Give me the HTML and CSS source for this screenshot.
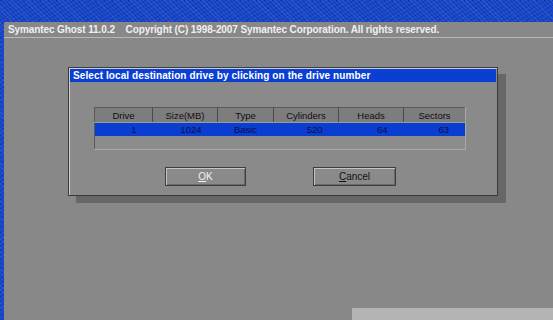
FILE: index.html
```html
<!DOCTYPE html>
<html lang="en">
<head>
  <meta charset="UTF-8" />
  <title>Symantec Ghost</title>
  <link rel="stylesheet" href="styles.css">
</head>
<body>
  <div class="screen">
    <div class="topbar">Symantec Ghost 11.0.2&nbsp;&nbsp;&nbsp; Copyright (C) 1998-2007 Symantec Corporation. All rights reserved.</div>

    <div class="dialog">
      <div class="dialog-title">Select local destination drive by clicking on the drive number</div>

      <table class="drives">
        <thead>
          <tr>
            <th class="c-drive">Drive</th>
            <th class="c-size">Size(MB)</th>
            <th class="c-type">Type</th>
            <th class="c-cyl">Cylinders</th>
            <th class="c-heads">Heads</th>
            <th class="c-sect">Sectors</th>
          </tr>
        </thead>
        <tbody>
          <tr class="selected">
            <td>1</td>
            <td>1024</td>
            <td class="center">Basic</td>
            <td>520</td>
            <td>64</td>
            <td>63</td>
          </tr>
          <tr class="empty">
            <td colspan="6"></td>
          </tr>
        </tbody>
      </table>

      <div class="buttons">
        <button class="btn btn-ok" type="button"><u>O</u>K</button>
        <button class="btn" type="button"><u>C</u>ancel</button>
      </div>
    </div>

    <div class="tray"></div>
  </div>
</body>
</html>
```

FILE: styles.css
```css
body {
  margin: 0;
  width: 553px;
  height: 320px;
  overflow: hidden;
  font-family: "Liberation Sans", Arial, sans-serif;
  background-color: #1846c8;
  background-image:
    repeating-linear-gradient(45deg, rgba(255,255,255,0.08) 0 1px, transparent 1px 3px),
    repeating-linear-gradient(-30deg, rgba(0,0,60,0.18) 0 1px, transparent 1px 4px);
}

.screen {
  margin: 22px 0 0 4px;
  height: 298px;
  background: #888888;
  display: flex;
  flex-direction: column;
}

.topbar {
  height: 15px;
  line-height: 15px;
  padding-left: 4px;
  border-bottom: 1px solid #b8b8b8;
  color: #f0f0f0;
  font-size: 10px;
  font-weight: bold;
  letter-spacing: -0.1px;
  white-space: nowrap;
}

.dialog {
  width: 426px;
  margin: 29px 0 0 64px;
  padding: 1px 1px 9px 1px;
  background: #8a8a8a;
  border: 1px solid #3a3a3a;
  box-shadow: inset 1px 1px 0 #cfcfcf, 8px 7px 0 #676767;
}

.dialog-title {
  height: 13px;
  line-height: 13px;
  padding-left: 3px;
  background: #0a3fd4;
  color: #fff;
  font-size: 10px;
  font-weight: bold;
  letter-spacing: 0.1px;
  white-space: nowrap;
  overflow: hidden;
}

.drives {
  width: 372px;
  margin: 25px 0 0 24px;
  border-collapse: collapse;
  border: 1px solid #a8a8a8;
  border-top-color: #5a5a5a;
  border-left-color: #5a5a5a;
  font-size: 9.5px;
  color: #101010;
}

.drives th {
  height: 14px;
  padding: 0;
  font-weight: normal;
  background: #7d7d7d;
  border-right: 1px solid #4a4a4a;
  border-bottom: 1px solid #9a9a9a;
}

.drives th:last-child {
  border-right: none;
}

.c-drive { width: 57px; }
.c-size { width: 64px; }
.c-type { width: 55px; }
.c-cyl { width: 64px; }
.c-heads { width: 64px; }

.drives td {
  height: 13px;
  padding: 0 16px 0 0;
  text-align: right;
}

.drives td.center {
  text-align: center;
  padding: 0;
}

.selected td {
  background: #0a3ed0;
  color: #0b0b4a;
}

.empty td {
  height: 13px;
  background: #8c8c8c;
}

.buttons {
  display: flex;
  justify-content: center;
  gap: 67px;
  margin-top: 17px;
  padding-right: 5px;
}

.btn {
  width: 83px;
  height: 19px;
  padding: 0;
  background: #8a8a8a;
  border: 1px solid #3e3e3e;
  box-shadow: inset 1px 1px 0 #c4c4c4, inset -1px -1px 0 #6a6a6a;
  font-family: "Liberation Sans", Arial, sans-serif;
  font-size: 10px;
  color: #111;
}

.btn-ok {
  width: 81px;
  color: #f2f2f2;
}

.tray {
  margin-top: auto;
  align-self: flex-end;
  width: 201px;
  height: 12px;
  background: #b4b4b4;
}
```
